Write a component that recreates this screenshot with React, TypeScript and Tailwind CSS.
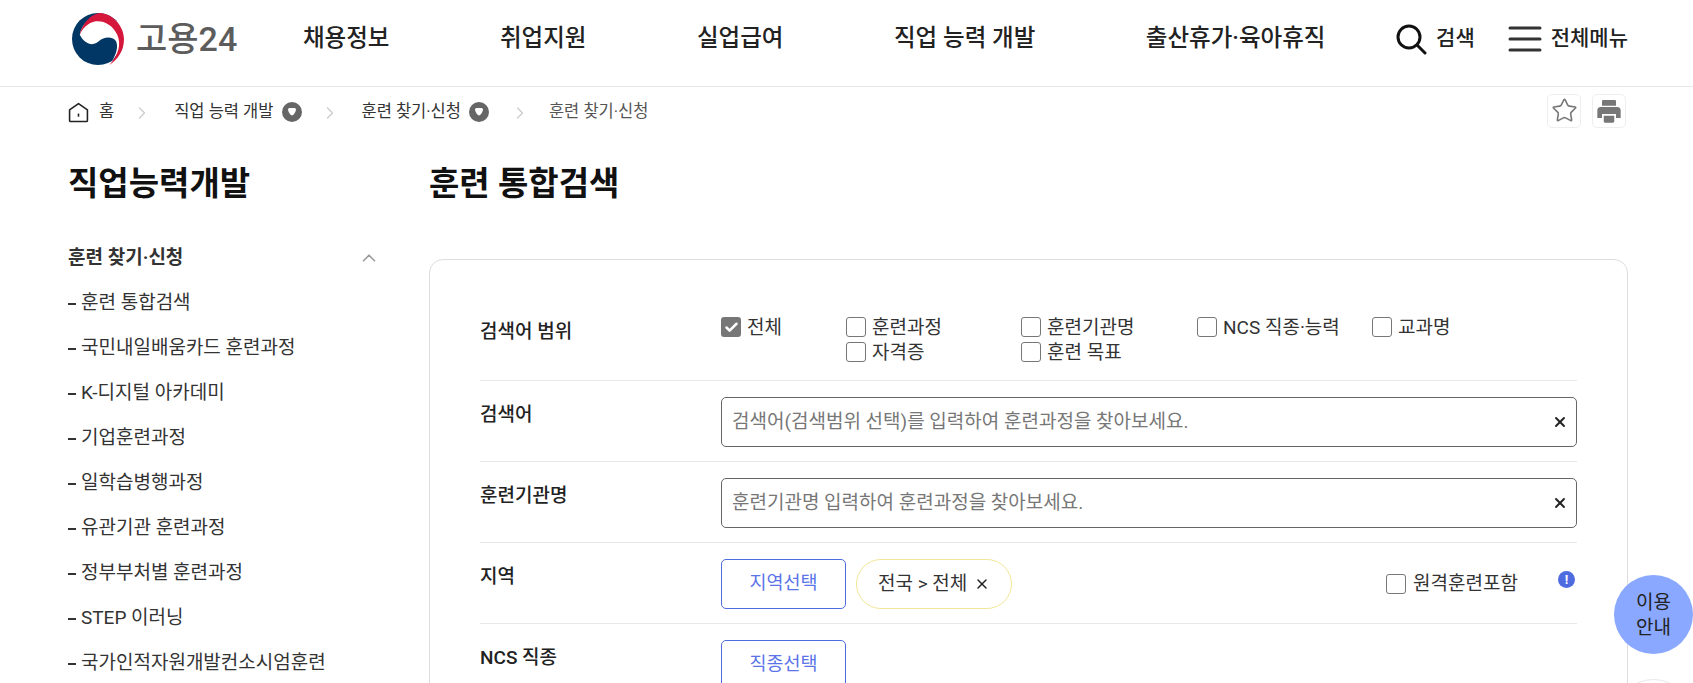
import { Check, ChevronRight, ChevronUp, Star, X } from "lucide-react";

const navItems = ["채용정보", "취업지원", "실업급여", "직업 능력 개발", "출산휴가·육아휴직"];

const sideItems = [
  "훈련 통합검색",
  "국민내일배움카드 훈련과정",
  "K-디지털 아카데미",
  "기업훈련과정",
  "일학습병행과정",
  "유관기관 훈련과정",
  "정부부처별 훈련과정",
  "STEP 이러닝",
  "국가인적자원개발컨소시엄훈련",
];

function Logo() {
  return (
    <svg width="56" height="52" viewBox="0 0 100 100" className="shrink-0">
      <circle cx="50" cy="50" r="50" fill="#003764" />
      <path d="M15 42C18 20 38 6 55 4L100 20V60L72 100C83 85 90 68 85 55C80 45 62 44 52 54C42 64 25 62 15 42Z" fill="#fff" />
      <path d="M15 42C20 18 40 0 55 0C82 3 100 28 100 50C100 72 88 90 72 100C90 80 95 60 87 42C78 22 58 13 42 17C30 20 20 30 15 42Z" fill="#d6173c" />
    </svg>
  );
}

function Badge() {
  return (
    <span className="-mt-[2px] flex h-5 w-5 shrink-0 items-center justify-center rounded-full bg-[#666]">
      <svg width="10" height="10" viewBox="0 0 10 10">
        <path d="M1 2.5C1 1.5 2 1 3 1H7C8 1 9 1.5 9 2.5C9 4.5 6.5 8.5 5 8.5C3.5 8.5 1 4.5 1 2.5Z" fill="#fff" />
      </svg>
    </span>
  );
}

function Sep({ className }: { className: string }) {
  return <ChevronRight size={20} strokeWidth={1.5} className={`shrink-0 text-[#ccc] ${className}`} />;
}

function Box({ checked }: { checked?: boolean }) {
  return checked ? (
    <span className="flex h-5 w-5 shrink-0 items-center justify-center rounded-[3px] bg-[#777]">
      <Check size={15} strokeWidth={4} className="text-white" />
    </span>
  ) : (
    <span className="block h-5 w-5 shrink-0 rounded-[3px] border border-[#777] bg-white" />
  );
}

function CheckItem({ label, checked }: { label: string; checked?: boolean }) {
  return (
    <label className="flex h-[25px] items-start gap-[6px] text-[19px] leading-[26px] text-[#333]">
      <span className="mt-[2px] block">
        <Box checked={checked} />
      </span>
      {label}
    </label>
  );
}

function Row({ label, children }: { label: string; children: React.ReactNode }) {
  return (
    <div className="flex border-b border-[#e8e8e8] pb-[14px] pt-[16px]">
      <div className="w-[241px] shrink-0 pt-[5px] text-[19px] font-medium leading-[26px] text-[#222]">{label}</div>
      <div className="min-w-0 flex-1">{children}</div>
    </div>
  );
}

function TextField({ placeholder }: { placeholder: string }) {
  return (
    <div className="flex h-[50px] items-center justify-between rounded-[5px] border border-[#666] pl-[10px] pr-[8px]">
      <span className="text-[19px] text-[#777]">{placeholder}</span>
      <X size={16} strokeWidth={2.8} className="text-[#222]" />
    </div>
  );
}

function SelectButton({ label }: { label: string }) {
  return (
    <button className="h-[50px] w-[125px] shrink-0 rounded-[5px] border border-[#4f6be0] text-[18.5px] text-[#5b74e8]">{label}</button>
  );
}

export default function App() {
  return (
    <div className="relative h-screen overflow-hidden bg-white font-['Roboto','Noto_Sans_CJK_KR','Noto_Sans',sans-serif]">
      {/* Header */}
      <header className="flex h-[87px] items-center border-b border-[#e8e8e8] pb-[8px] pl-[70px] pr-[65px]">
        <div className="flex w-[233px] items-center gap-[10px]">
          <Logo />
          <span className="text-[34px] font-medium leading-none text-[#5c5c5c]">고용24</span>
        </div>
        <nav className="flex gap-[110.5px] text-[23.5px] font-medium text-[#222]">
          {navItems.map((n) => (
            <span key={n}>{n}</span>
          ))}
        </nav>
        <div className="ml-auto flex items-center text-[21px] font-medium text-[#222]">
          <svg width="32" height="32" viewBox="0 0 32 32" fill="none" stroke="#111" strokeWidth="3">
            <circle cx="14" cy="14" r="11" />
            <path d="M22 22L30 30" strokeLinecap="round" />
          </svg>
          <span className="ml-[9px]">검색</span>
          <svg width="34" height="26" viewBox="0 0 34 26" className="ml-[33px]" fill="none" stroke="#333" strokeWidth="3" strokeLinecap="round">
            <path d="M2 2H32M2 13H32M2 24H32" />
          </svg>
          <span className="ml-[9px]">전체메뉴</span>
        </div>
      </header>

      {/* Breadcrumb */}
      <div className="flex h-[48px] items-center pl-[68px] pr-[67px] pt-[3px] text-[16.5px] text-[#333]">
        <svg width="21" height="21" viewBox="0 0 20 20" fill="none" stroke="#222" strokeWidth="1.5">
          <path d="M1.5 7.5L10 1.5L18.5 7.5V17.5C18.5 18.2 18 18.5 17.5 18.5H2.5C2 18.5 1.5 18.2 1.5 17.5Z" strokeLinejoin="round" />
          <path d="M10 11V14" />
        </svg>
        <span className="ml-[10px]">홈</span>
        <Sep className="ml-[18px] mr-[22px]" />
        <span>직업 능력 개발</span>
        <span className="ml-[9px]">
          <Badge />
        </span>
        <Sep className="ml-[18px] mr-[21px]" />
        <span>훈련 찾기·신청</span>
        <span className="ml-[8px]">
          <Badge />
        </span>
        <Sep className="ml-[21px] mr-[19px]" />
        <span className="text-[#555]">훈련 찾기·신청</span>
        <div className="ml-auto flex -translate-y-[2px] gap-[11px]">
          <span className="flex h-[34px] w-[34px] items-center justify-center rounded-[5px] border border-[#eee]">
            <Star size={27} strokeWidth={1.4} className="text-[#777]" />
          </span>
          <span className="flex h-[34px] w-[34px] items-center justify-center rounded-[5px] border border-[#eee]">
            <svg width="28" height="28" viewBox="0 0 24 24" fill="#777">
              <path d="M7 2.5h10a1 1 0 011 1V7.5H6V3.5a1 1 0 011-1z" />
              <path d="M5 8.5h14a3 3 0 013 3v6.5h-4v-3.5H6V18H2v-6.5a3 3 0 013-3z" />
              <path d="M7.5 16h9v5a1 1 0 01-1 1h-7a1 1 0 01-1-1z" />
            </svg>
          </span>
        </div>
      </div>

      {/* Body */}
      <div className="flex pl-[68px] pr-[65px] pt-[25px]">
        <aside className="w-[361px] shrink-0">
          <h2 className="text-[33px] font-bold leading-[48px] text-[#111]">직업능력개발</h2>
          <div className="mt-[36px] flex w-[312px] items-center justify-between">
            <span className="text-[19px] font-bold leading-[28px] text-[#333]">훈련 찾기·신청</span>
            <ChevronUp size={22} strokeWidth={1.8} className="text-[#999]" />
          </div>
          <ul className="mt-[9px]">
            {sideItems.map((s) => (
              <li key={s} className="flex h-[45px] items-center text-[19px] text-[#333]">
                <span className="mr-[5px] h-[2px] w-[8px] bg-[#333]" />
                {s}
              </li>
            ))}
          </ul>
        </aside>

        <main className="min-w-0 flex-1">
          <h1 className="text-[33px] font-bold leading-[48px] text-[#111]">훈련 통합검색</h1>
          <div className="mt-[51px] rounded-t-[14px] border border-[#ddd] px-[50px] pt-[38px]">
            <Row label="검색어 범위">
              <div className="mt-[1px] grid grid-cols-[125px_175px_176px_175px_auto] pb-[1px]">
                <CheckItem label="전체" checked />
                <CheckItem label="훈련과정" />
                <CheckItem label="훈련기관명" />
                <CheckItem label="NCS 직종·능력" />
                <CheckItem label="교과명" />
                <span />
                <CheckItem label="자격증" />
                <CheckItem label="훈련 목표" />
              </div>
            </Row>
            <Row label="검색어">
              <TextField placeholder="검색어(검색범위 선택)를 입력하여 훈련과정을 찾아보세요." />
            </Row>
            <Row label="훈련기관명">
              <TextField placeholder="훈련기관명 입력하여 훈련과정을 찾아보세요." />
            </Row>
            <Row label="지역">
              <div className="flex items-center">
                <SelectButton label="지역선택" />
                <span className="ml-[10px] flex h-[50px] items-center gap-[7px] rounded-full border border-[#f1e796] px-[21px] text-[19px] text-[#333]">
                  전국 &gt; 전체
                  <X size={16} strokeWidth={2.2} className="text-[#222]" />
                </span>
                <label className="ml-auto flex items-center gap-[7px] text-[19px] text-[#333]">
                  <Box />
                  원격훈련포함
                </label>
                <span className="ml-[40px] mr-[2px] mt-[-9px] flex h-[17px] w-[17px] items-center justify-center rounded-full bg-[#4f6be0] text-[13px] font-bold leading-none text-white">!</span>
              </div>
            </Row>
            <Row label="NCS 직종">
              <SelectButton label="직종선택" />
            </Row>
          </div>
        </main>
      </div>

      {/* Floating buttons */}
      <button className="absolute left-[1614px] top-[575px] flex h-[79px] w-[79px] items-center justify-center rounded-full bg-[#8aa8ff] text-[19px] leading-[25px] text-[#222]">
        이용
        <br />
        안내
      </button>
      <span className="absolute left-[1614px] top-[679px] h-[79px] w-[79px] rounded-full border border-[#e8e8e8] bg-white" />
    </div>
  );
}
